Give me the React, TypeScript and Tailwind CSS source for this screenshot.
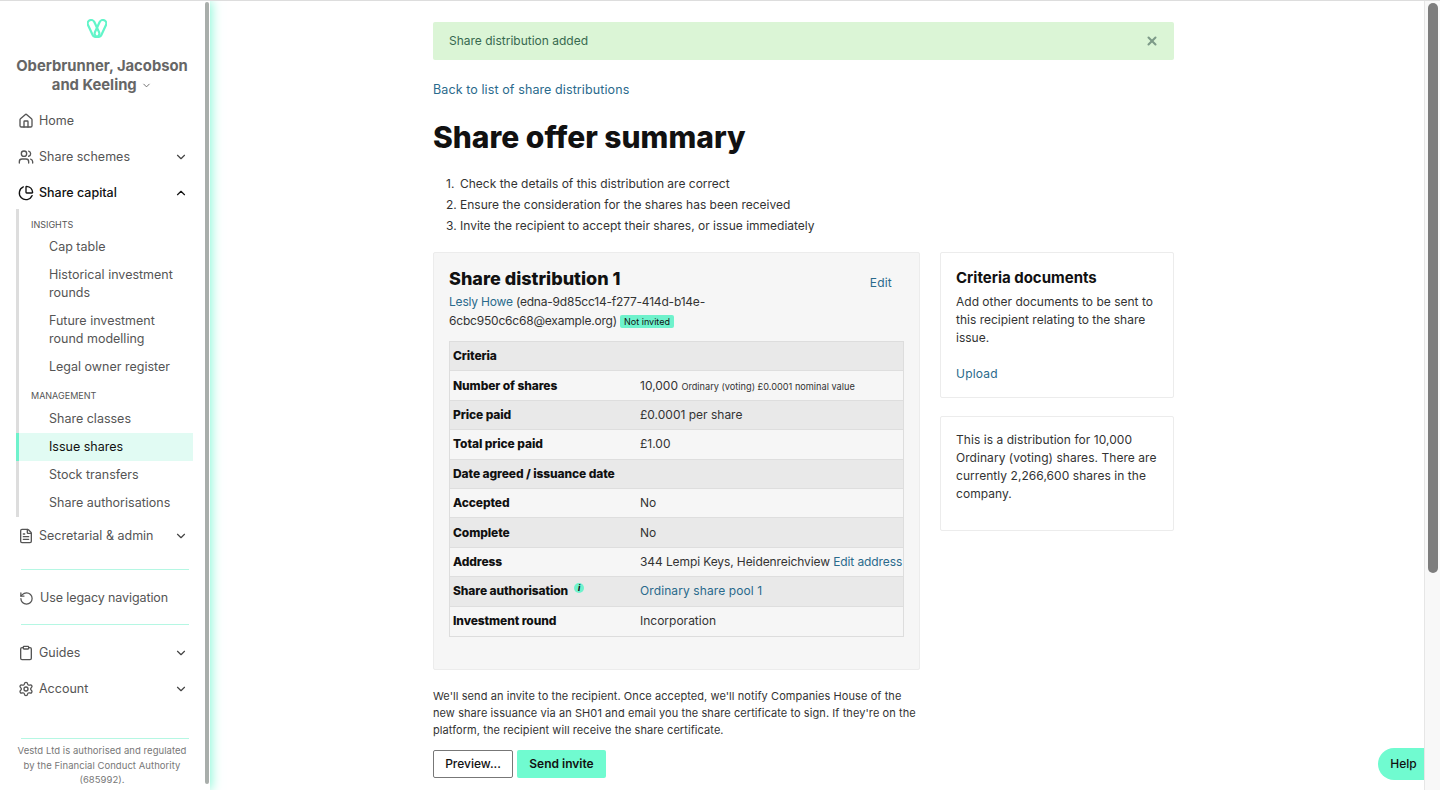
import { ChevronDown, ChevronUp, Clipboard, FileText, House, PieChart, RotateCcw, Settings, Users, X } from "lucide-react";
import type { ReactNode } from "react";

const font = { fontFamily: "'Inter', 'Liberation Sans', sans-serif" };

const NavItem = ({ icon, label, chevron, active }: { icon: ReactNode; label: string; chevron?: "up" | "down"; active?: boolean }) => (
  <div className={`flex h-[36px] items-center pl-[18px] pr-[22px] text-[12.5px] ${active ? "font-medium text-[#111]" : "text-[#555]"}`}>
    <span className="flex w-[21px] shrink-0 items-center">{icon}</span>
    <span className="flex-1">{label}</span>
    {chevron === "down" && <ChevronDown size={14} className="text-[#444]" />}
    {chevron === "up" && <ChevronUp size={14} className="text-[#111]" />}
  </div>
);

const SubItem = ({ label, active }: { label: ReactNode; active?: boolean }) => (
  <div className={`whitespace-nowrap py-[5px] pr-[10px] text-[12.5px] leading-[18px] ${active ? "-ml-[3px] border-l-[3px] border-[#6ff2cc] bg-[#e1fbf3] pl-[30px] text-[#111]" : "pl-[30px] text-[#555]"}`}>
    {label}
  </div>
);

const Sidebar = () => (
  <aside className="relative flex h-[789px] w-[210px] shrink-0 flex-col shadow-[1px_0_11px_#7ff7d4]">
    <div className="flex h-[38px] items-start justify-center pr-[17px] pt-[18px]">
      <svg width="20" height="20" viewBox="0 0 20 20" fill="none" stroke="#62f5c9" strokeWidth="2.2">
        <rect x="3" y="0.5" width="7" height="18" rx="3.5" transform="rotate(-25 6.5 9.5)" />
        <rect x="10" y="0.5" width="7" height="18" rx="3.5" transform="rotate(25 13.5 9.5)" />
      </svg>
    </div>
    <div className="mt-[18px] pr-[6px] text-center text-[14.8px] font-bold leading-[19px] text-[#666]">
      Oberbrunner, Jacobson
      <br />
      and Keeling <ChevronDown size={11} className="ml-[1px] inline" />
    </div>
    <div className="mt-[8px]">
      <NavItem icon={<House size={16} />} label="Home" />
      <NavItem icon={<Users size={16} />} label="Share schemes" chevron="down" />
      <NavItem icon={<PieChart size={16} className="text-[#111]" />} label="Share capital" chevron="up" active />
    </div>
    <div className="-mt-[2px] ml-[16px] mr-[17px] border-l-[3px] border-[#dddddd]">
      <div className="pl-[12px] pt-[10px] text-[9px] leading-[12px] text-[#555]">INSIGHTS</div>
      <div className="mt-[2px]">
        <SubItem label="Cap table" />
        <SubItem label={<>Historical investment<br />rounds</>} />
        <SubItem label={<>Future investment<br />round modelling</>} />
        <SubItem label="Legal owner register" />
      </div>
      <div className="pl-[12px] pt-[9px] text-[9px] leading-[12px] text-[#555]">MANAGEMENT</div>
      <div className="mt-[3px]">
        <SubItem label="Share classes" />
        <SubItem label="Issue shares" active />
        <SubItem label="Stock transfers" />
        <SubItem label="Share authorisations" />
      </div>
    </div>
    <div className="mt-[1px]">
      <NavItem icon={<FileText size={16} />} label="Secretarial & admin" chevron="down" />
    </div>
    <div className="mx-[21px] mt-[15px] border-t border-[#b5f7e3]" />
    <div className="flex h-[54px] items-center pl-[19px] pt-[2px] text-[12.5px] tracking-[-0.1px] text-[#555]">
      <RotateCcw size={15} className="mr-[6px]" />
      Use legacy navigation
    </div>
    <div className="mx-[21px] border-t border-[#b5f7e3]" />
    <div className="mt-[10px]">
      <NavItem icon={<Clipboard size={16} />} label="Guides" chevron="down" />
      <NavItem icon={<Settings size={16} />} label="Account" chevron="down" />
    </div>
    <div className="mx-[21px] mt-[31px] border-t border-[#b5f7e3]" />
    <div className="mt-[5px] pl-[14px] pr-[20px] text-center text-[9.5px] leading-[14.5px] tracking-[0.05px] text-[#777]">
      Vestd Ltd is authorised and regulated by the Financial Conduct Authority (685992).
    </div>
    <div className="absolute right-[1px] top-[1px] h-[782px] w-[4px] rounded-full bg-[#a9aeab]" />
  </aside>
);

const rows: { label: ReactNode; value?: ReactNode }[] = [
  { label: "Criteria" },
  {
    label: "Number of shares",
    value: (
      <>
        10,000 <span className="text-[9.2px]">Ordinary (voting) £0.0001 nominal value</span>
      </>
    ),
  },
  { label: "Price paid", value: "£0.0001 per share" },
  { label: "Total price paid", value: "£1.00" },
  { label: "Date agreed / issuance date" },
  { label: "Accepted", value: "No" },
  { label: "Complete", value: "No" },
  {
    label: "Address",
    value: (
      <span className="tracking-[-0.1px]">
        344 Lempi Keys, Heidenreichview <span className="text-[#2a6a8c]">Edit address</span>
      </span>
    ),
  },
  {
    label: (
      <span className="flex items-center">
        Share authorisation
        <span className="relative -top-[3px] ml-[6px] flex h-[10px] w-[10px] items-center justify-center rounded-full bg-[#6ff2cc] text-[8px] italic leading-none text-[#111]">
          i
        </span>
      </span>
    ),
    value: <span className="tracking-[0.1px] text-[#2a6a8c]">Ordinary share pool 1</span>,
  },
  { label: "Investment round", value: "Incorporation" },
];

const DistributionPanel = () => (
  <div className="h-[418px] w-[487px] rounded-[2px] border border-[#ececec] bg-[#f6f6f6] pl-[15px] pr-[15px] pt-[14px]">
    <div className="flex items-start justify-between">
      <h2 className="text-[18px] font-extrabold leading-[24px] text-[#111]">Share distribution 1</h2>
      <span className="mr-[12px] mt-[9px] text-[12px] leading-[14px] tracking-[0.2px] text-[#2a6a8c]">Edit</span>
    </div>
    <p className="mt-[1px] text-[12px] leading-[19px] tracking-[-0.2px] text-[#333]">
      <span className="text-[#2a6a8c]">Lesly Howe</span> (edna-9d85cc14-f277-414d-b14e-
      <br />
      6cbc950c6c68@example.org){" "}
      <span className="rounded-[2px] bg-[#6ff2cc] px-[4px] py-[1px] text-[9px] tracking-normal text-[#111]">Not invited</span>
    </p>
    <div className="mt-[10px] border border-[#dddddd] text-[12px]">
      {rows.map((row, i) => (
        <div
          key={i}
          className={`flex h-[29.4px] items-center border-b border-[#dedede] last:border-b-0 ${i % 2 === 0 ? "bg-[#e9e9e9]" : "bg-[#f6f6f6]"}`}
        >
          <div className="w-[190px] shrink-0 pl-[3px] text-[12px] font-extrabold tracking-[-0.1px] text-[#111]">{row.label}</div>
          {row.value && <div className="whitespace-nowrap text-[#333]">{row.value}</div>}
        </div>
      ))}
    </div>
  </div>
);

const SideCard = ({ children, h }: { children: ReactNode; h: string }) => (
  <div className={`rounded-[2px] border border-[#ececec] bg-white px-[15px] ${h}`}>{children}</div>
);

export default function App() {
  return (
    <div style={font} className="flex h-[790px] w-[1440px] overflow-hidden border-t border-[#dddddd] bg-white">
      <Sidebar />
      <main className="relative flex-1">
        <div className="ml-[223px] w-[741px] pt-[21px]">
          <div className="flex h-[38px] items-center justify-between rounded-[2px] bg-[#dbf5d6] pl-[16px] pr-[15px] text-[12px] text-[#37694f]">
            Share distribution added
            <X size={14} strokeWidth={3.5} className="text-[#7d9a88]" />
          </div>
          <a className="mt-[22px] block text-[12.5px] leading-[16px] tracking-[0.1px] text-[#2a6a8c]">Back to list of share distributions</a>
          <h1 className="mt-[20px] text-[30px] font-extrabold leading-[38px] text-[#111]">Share offer summary</h1>
          <ol className="mt-[17px] text-[12px] leading-[21px] text-[#333]">
            <li><span className="inline-block w-[27px] pl-[13px]">1.</span>Check the details of this distribution are correct</li>
            <li><span className="inline-block w-[27px] pl-[13px]">2.</span>Ensure the consideration for the shares has been received</li>
            <li><span className="inline-block w-[27px] pl-[13px]">3.</span>Invite the recipient to accept their shares, or issue immediately</li>
          </ol>
          <div className="mt-[16px] flex gap-[20px]">
            <DistributionPanel />
            <div className="flex w-[234px] flex-col gap-[18px]">
              <SideCard h="h-[146px] pt-[15px]">
                <h3 className="text-[15px] font-bold leading-[20px] text-[#111]">Criteria documents</h3>
                <p className="mt-[5px] text-[12px] leading-[18px] text-[#333]">
                  Add other documents to be sent to this recipient relating to the share issue.
                </p>
                <a className="mt-[18px] block text-[12px] leading-[18px] tracking-[0.2px] text-[#2a6a8c]">Upload</a>
              </SideCard>
              <SideCard h="h-[115px] pt-[14px]">
                <p className="text-[12px] leading-[18px] tracking-[0.05px] text-[#333]">
                  This is a distribution for 10,000 Ordinary (voting) shares. There are currently 2,266,600 shares in the company.
                </p>
              </SideCard>
            </div>
          </div>
          <p className="mt-[18px] w-[487px] whitespace-nowrap text-[11px] leading-[17px] tracking-[0.08px] text-[#333]">
            We'll send an invite to the recipient. Once accepted, we'll notify Companies House of the
            <br />
            new share issuance via an SH01 and email you the share certificate to sign. If they're on the
            <br />
            platform, the recipient will receive the share certificate.
          </p>
          <div className="mt-[11px] flex gap-[4px]">
            <button className="h-[28px] w-[80px] rounded-[2px] border border-[#777] bg-white text-[12px] font-medium text-[#111]">Preview...</button>
            <button className="h-[28px] w-[89px] rounded-[2px] bg-[#70fbd0] text-[12px] font-semibold text-[#111]">Send invite</button>
          </div>
        </div>
        <div className="absolute bottom-[10px] right-[0px] flex h-[32px] w-[46px] items-center justify-center rounded-l-full bg-[#70fbd0] pl-[5px] text-[12px] font-medium text-[#111]">Help</div>
      </main>
      <div className="flex w-[16px] shrink-0 justify-center border-l border-[#e6e6e6] bg-[#f8f8f8] pt-[2px]">
        <div className="h-[570px] w-[10px] rounded-full bg-[#7d7d7d]" />
      </div>
    </div>
  );
}
